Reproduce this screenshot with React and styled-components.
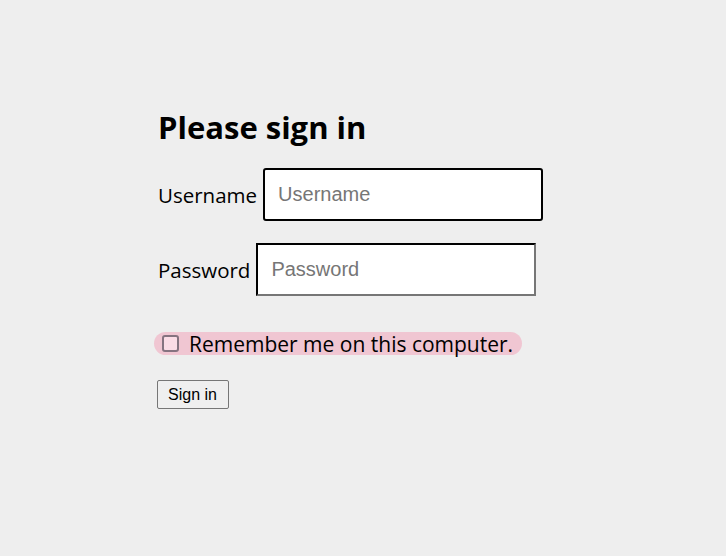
import React from 'react'
import styled, { createGlobalStyle } from 'styled-components'

const GlobalStyle = createGlobalStyle`
  html, body {
    margin: 0;
    background: #eeeeee;
  }
`

const Page = styled.div`
  padding: 106px 0 0 158px;
  font-family: 'Open Sans', 'Noto Sans', sans-serif;
  color: #000;
`

const Title = styled.h1`
  margin: 0 0 20px;
  font-size: 31px;
  font-weight: 700;
  line-height: 42px;
`

const Row = styled.div`
  display: flex;
  align-items: center;
  gap: 6px;
  margin-bottom: 22px;
`

const Label = styled.label`
  font-size: 20.5px;
`

const Input = styled.input`
  box-sizing: border-box;
  width: 280px;
  height: 53px;
  padding: 0 13px;
  font-family: 'Liberation Sans', Arial, sans-serif;
  font-size: 20px;
  background: #fff;
  border: 2px inset #767676;
  border-top-color: #222;
  border-left-color: #222;
  outline: none;
  caret-color: #000;
  ${(p) => p.$focused && `
    border: 2px solid #000;
    border-radius: 3px;
  `}
  &::placeholder {
    color: #767676;
  }
`

const Remember = styled.label`
  display: inline-flex;
  align-items: center;
  gap: 10px;
  margin: 14px 0 0 -4px;
  padding: 0 9px 0 8px;
  height: 23px;
  border-radius: 12px;
  background: #f0c6d2;
  font-size: 21px;
`

const Check = styled.input`
  appearance: none;
  margin: 0;
  width: 17px;
  height: 17px;
  border: 2px solid #857380;
  border-radius: 3px;
  background: #fbdce6;
`

const Button = styled.button`
  display: block;
  margin: 23px 0 0 -1px;
  padding: 2px 11px 2px 10px;
  height: 29px;
  font-family: 'Liberation Sans', Arial, sans-serif;
  font-size: 16px;
  color: #000;
  background: #efefef;
  border: 1px solid #767676;
  border-radius: 2px;
`

const App = () =>
  <Page>
    <GlobalStyle />
    <Title>Please sign in</Title>
    <Row>
      <Label htmlFor="username">Username</Label>
      <Input id="username" placeholder="Username" $focused autoFocus />
    </Row>
    <Row>
      <Label htmlFor="password">Password</Label>
      <Input id="password" type="password" placeholder="Password" />
    </Row>
    <Remember>
      <Check type="checkbox" />
      Remember me on this computer.
    </Remember>
    <Button>Sign in</Button>
  </Page>

export default App
